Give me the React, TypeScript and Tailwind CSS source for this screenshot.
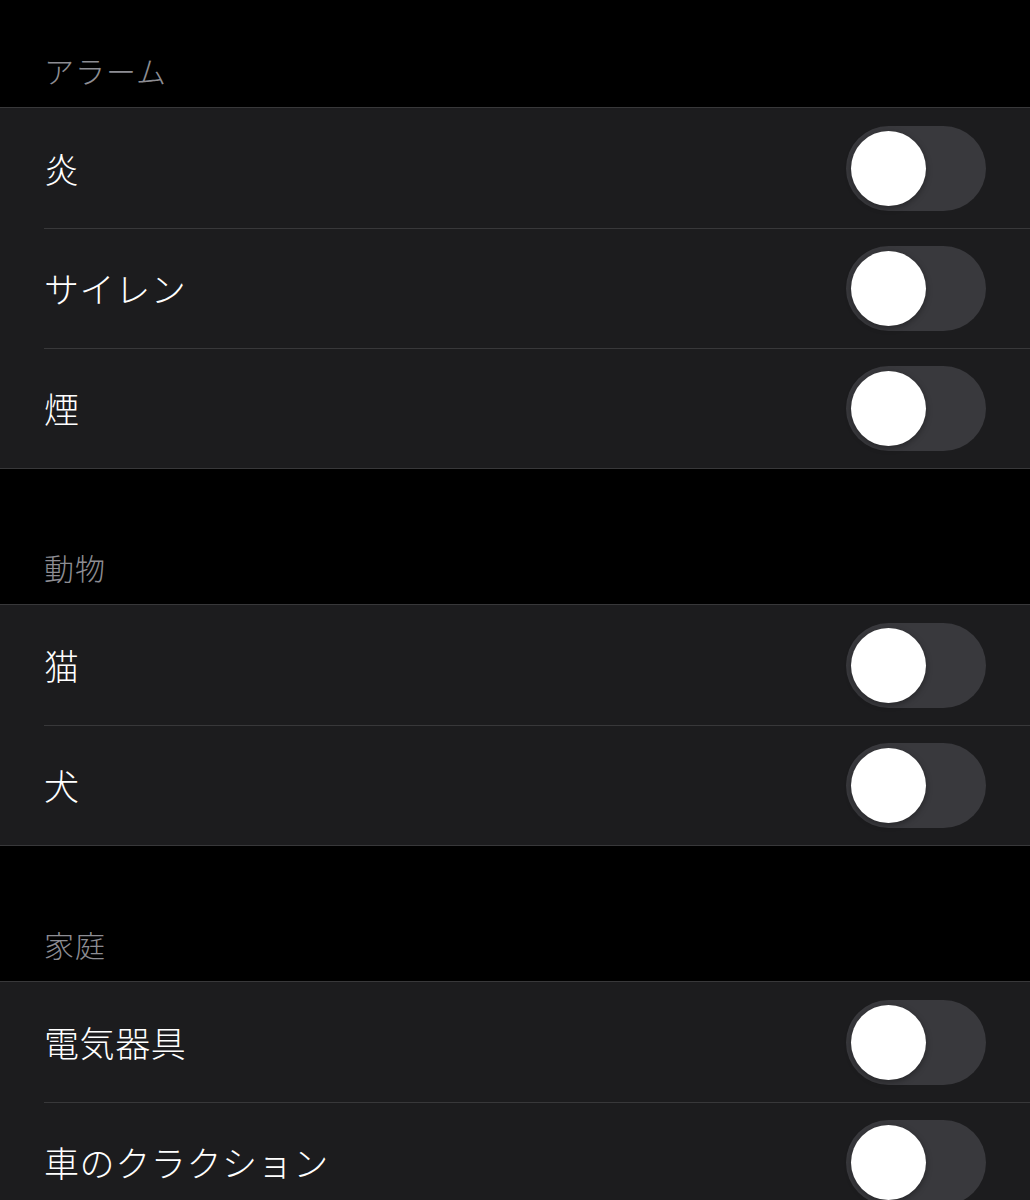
const sections = [
  { title: "アラーム", items: ["炎", "サイレン", "煙"] },
  { title: "動物", items: ["猫", "犬"] },
  { title: "家庭", items: ["電気器具", "車のクラクション"] },
];

function Toggle() {
  return (
    <div className="w-[140px] h-[85px] rounded-full bg-[#39393d] p-[5px] flex items-center shrink-0">
      <div className="w-[75px] h-[75px] rounded-full bg-white shadow-[0_2px_6px_rgba(0,0,0,0.35)]"></div>
    </div>
  );
}

export default function App() {
  return (
    <div
      className="bg-black w-[1030px] h-[1200px] overflow-hidden"
      style={{ fontFamily: '"Noto Sans CJK JP", "Noto Sans", sans-serif' }}
    >
      {sections.map((s, i) => (
        <div key={s.title}>
          <div className={i === 0 ? "pt-[52px] pb-[19px] pl-[44px]" : "pt-[80px] pb-[19px] pl-[44px]"}>
            <div className="text-[30px] leading-[36px] tracking-[1px] font-light text-[#8d8d93]">{s.title}</div>
          </div>
          <div className="bg-[#1c1c1e] border-t border-b border-[#38383a]">
            {s.items.map((item, j) => (
              <div key={item} className="pl-[44px]">
                <div
                  className={
                    j === 0
                      ? "h-[120px] flex items-center justify-between pr-[44px]"
                      : "h-[120px] flex items-center justify-between pr-[44px] border-t border-[#38383a]"
                  }
                >
                  <span className="text-[35px] tracking-[0.6px] font-light text-white">{item}</span>
                  <Toggle />
                </div>
              </div>
            ))}
          </div>
        </div>
      ))}
    </div>
  );
}
